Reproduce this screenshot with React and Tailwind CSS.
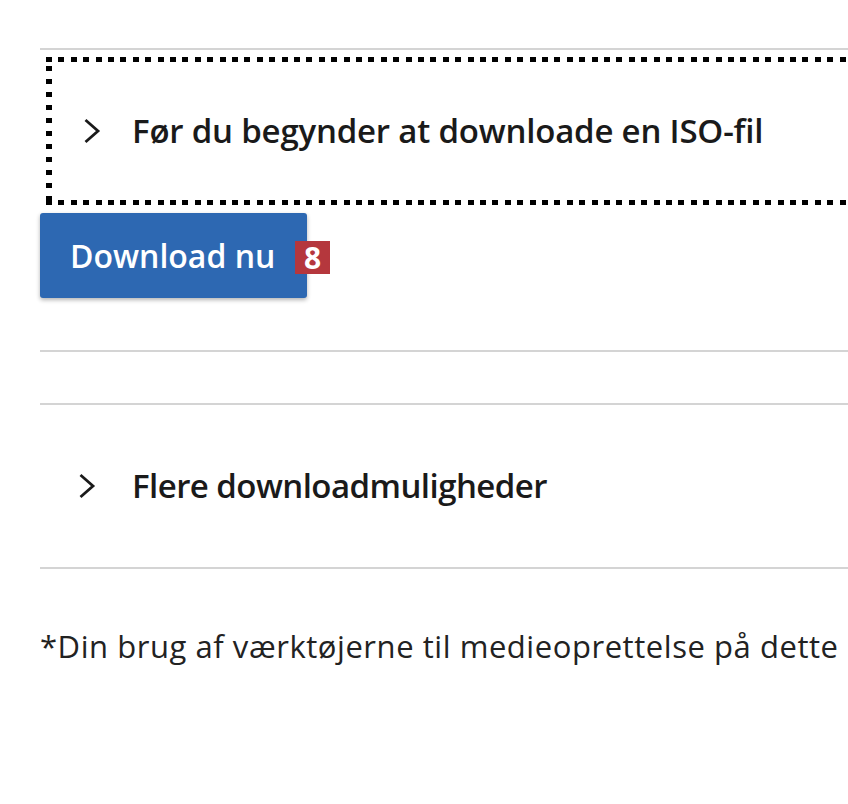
const font = { fontFamily: '"Open Sans", "Noto Sans", Arial, sans-serif' };

function Chevron({ className = '' }) {
  return (
    <svg width="18" height="26" viewBox="0 0 18 26" className={'shrink-0 ' + className}>
      <polyline points="2.5,2 15,13 2.5,24" fill="none" stroke="#1a1a1a" strokeWidth="2.8" />
    </svg>
  );
}

export default function App() {
  return (
    <div className="w-[848px] h-[804px] overflow-hidden bg-white" style={font}>
      <div className="w-[1100px] pl-[40px] pt-[48px]">
        <div className="h-[2px] bg-[#d4d4d4]" />

        {/* focus box with square dots */}
        <div className="ml-[6px] mt-[7px] flex flex-col">
          <div className="h-[5px] bg-[repeating-linear-gradient(90deg,#000_0px,#000_6px,transparent_6px,transparent_12.4px)]" />
          <div className="flex h-[138px]">
            <div className="w-[6px] bg-[repeating-linear-gradient(180deg,transparent_0px,transparent_4px,#000_4px,#000_9px,transparent_9px,transparent_13px)] bg-[length:6px_13px]" />
            <div className="flex items-center pl-[31px]">
              <Chevron />
              <span className="ml-[31px] text-[33px] font-semibold text-[#1a1a1a] tracking-[-0.2px]">
                Før du begynder at downloade en ISO-fil
              </span>
            </div>
          </div>
          <div className="h-[5px] bg-[repeating-linear-gradient(90deg,#000_0px,#000_6px,transparent_6px,transparent_12.4px)]" />
        </div>

        <div className="mt-[8px] flex">
          <button className="w-[267px] h-[85px] rounded-[3px] bg-[#2d68b2] shadow-[0_2px_4px_rgba(0,0,0,0.3)] flex items-center pl-[30px] relative">
            <span className="text-[32px] font-semibold text-white">Download nu</span>
            <span className="absolute left-[255px] top-[28px] w-[35px] h-[33px] bg-[#b5373d] text-white text-[30px] font-bold flex items-center justify-center leading-none">
              8
            </span>
          </button>
        </div>

        <div className="mt-[52px] h-[2px] bg-[#d4d4d4]" />
        <div className="mt-[51px] h-[2px] bg-[#d4d4d4]" />

        <div className="h-[162px] flex items-center pl-[38px]">
          <Chevron />
          <span className="ml-[36px] text-[33px] font-semibold text-[#1a1a1a] tracking-[-0.55px]">
            Flere downloadmuligheder
          </span>
        </div>
        <div className="h-[2px] bg-[#d4d4d4]" />

        <p className="mt-[54px] text-[31px] text-[#222] tracking-[0.55px] whitespace-nowrap">
          *Din brug af værktøjerne til medieoprettelse på dette
        </p>
      </div>
    </div>
  );
}
